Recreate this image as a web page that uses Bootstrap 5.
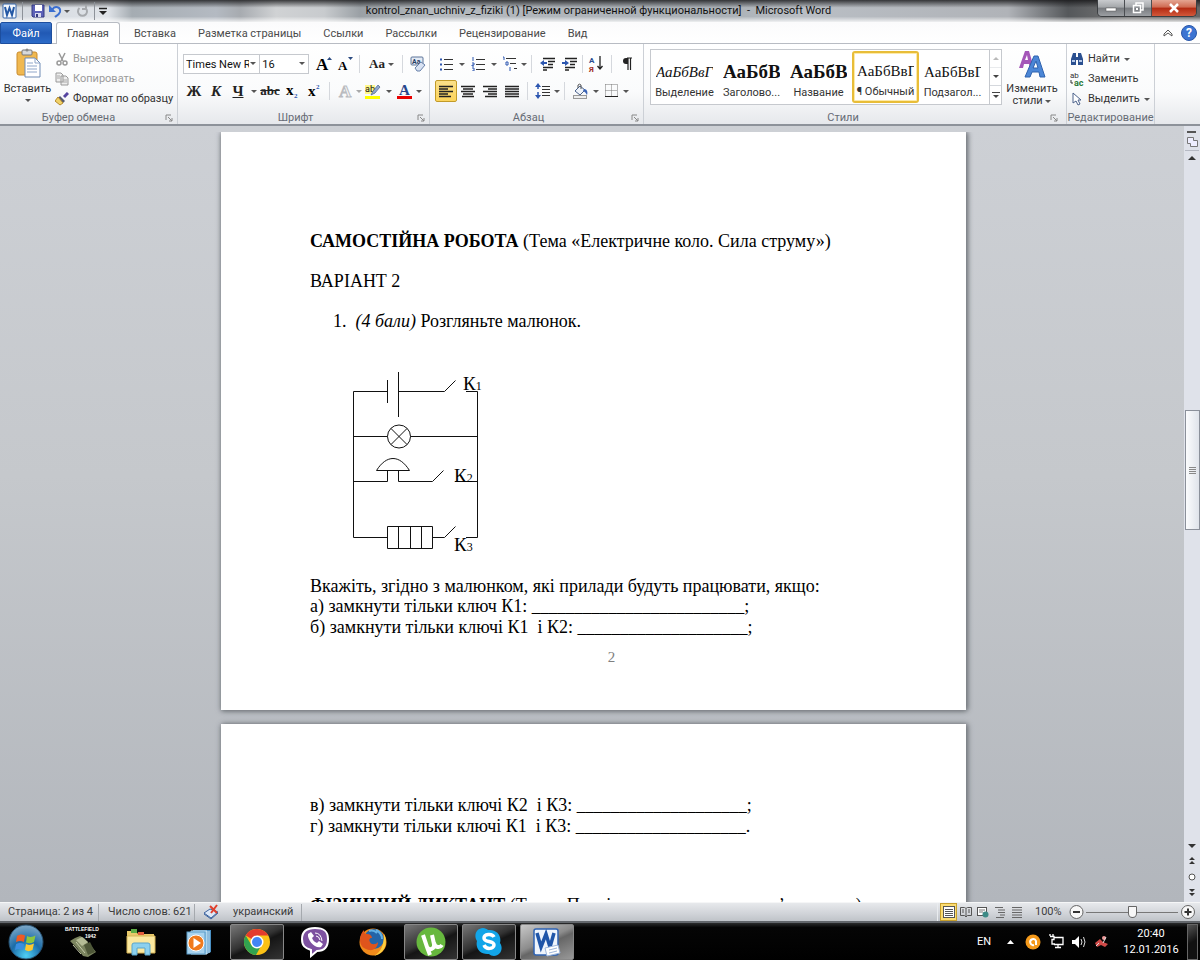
<!DOCTYPE html>
<html lang="ru">
<head>
<meta charset="utf-8">
<meta name="viewport" content="width=device-width, initial-scale=1">
<title>kontrol_znan_uchniv_z_fiziki (1) - Microsoft Word</title>
<link href="https://cdn.jsdelivr.net/npm/bootstrap@5.3.0/dist/css/bootstrap.min.css" rel="stylesheet">
<style>
body{font:11px/14px Roboto,"Open Sans",sans-serif;color:#333;height:100vh;overflow:hidden;background:#c5c8cc}
button,input,select{font:inherit;color:inherit}
button{background:none;border:0;padding:0}
a{color:inherit;text-decoration:none}
svg{display:block;flex:none}
/* title bar */
.titlebar{height:22px;background:linear-gradient(180deg,rgba(20,20,22,.8) 0,rgba(255,255,255,0) 35%,rgba(255,255,255,0) 75%,rgba(255,255,255,.8) 100%),linear-gradient(90deg,#d3d8de 0,#dfe3e8 9%,#a5acb2 11%,#b4bac2 18%,#a7abb0 20%,#d0d2d4 23%,#c8cbce 27%,#9aa0a5 30%,#b5babf 36%,#aab0b6 60%,#b9bec4 67%,#b0b3b8 84%,#55585b 89%,#777 94%,#666 100%)}
.quick{padding-left:2px;width:130px}
.quick .split{background:#8d9299}
.caption-text{color:#111;padding-right:30px;line-height:16px}
.winbtns{height:17px;margin-right:3px;border:1px solid #3c3f42;border-top:0;border-radius:0 0 5px 5px;overflow:hidden}
.winbtn{height:16px;display:flex;align-items:center;justify-content:center;background:linear-gradient(#c9cbce 0,#a4a7aa 45%,#777a7e 50%,#9b9ea2);border-right:1px solid #4b4e52;width:27px}
.winclose{width:44px;border:0;background:linear-gradient(#e4a592 0,#cf6a51 45%,#b32a12 50%,#d2583a)}
/* tabs */
.tabs{height:22px;background:linear-gradient(#fbfbfc,#fff);border-bottom:1px solid #b8bcc3}
.tab{padding:0 11px;height:22px;line-height:23px;color:#4a4a4a}
.tab-file{width:52px;padding:0;margin-right:4px;line-height:21px;text-align:center;color:#fff;border-radius:2px 2px 0 0;border:1px solid #1d4e9e;background:linear-gradient(#3f7bd0,#2159b4 50%,#2c6bc8)}
.tab-on{width:64px;padding:0;text-align:center;line-height:21px;background:#fff;border:1px solid #b8bcc3;border-bottom:0;border-radius:3px 3px 0 0;margin-right:3px}
/* ribbon */
.ribbon{height:82px;background:linear-gradient(#fff 0,#fafbfc 60%,#e6e8ec 100%);border-bottom:2px solid #8d929a}
.group{border-right:1px solid #ccd0d6;flex:none;height:80px}
.group-body{height:66px}
.tools{padding:9px 0 0 5px;display:flex;flex-direction:column;gap:5px}
.group-name{height:14px;color:#666b75;text-align:center;line-height:15px;position:relative}
.corner{position:absolute;right:4px;top:4px}
.g-clip{width:178px}.g-font{width:252px}.g-para{width:214px}.g-style{width:423px}.g-edit{width:88px}
.tool{width:22px;height:22px;display:flex;align-items:center;justify-content:center;flex:none;color:#222}
.tool-on{border:1px solid #c29b29;border-radius:2px;background:linear-gradient(#fbe08a,#fcd45c)}
.drop{width:10px;display:flex;justify-content:center;flex:none}
.drop-s{width:6px;display:flex;justify-content:center;flex:none}
.drop::after,.drop-s::after,.tri::after{content:"";display:inline-block;border:3px solid transparent;border-top:3px solid #555;border-bottom:0;vertical-align:middle}
.split{width:1px;height:18px;background:#d5d8dd;margin:0 4px;flex:none}
.split-s{margin:0 2px}
.toolrow{height:22px}
.combo{height:20px;border:1px solid #c6c9ce;background:#fff;padding:0 10px 0 2px;appearance:none;color:#111;border-radius:0}
.combo-wrap{position:relative}
.combo-wrap::after{content:"";position:absolute;right:4px;top:8px;border:3px solid transparent;border-top-color:#555;border-bottom:0}
.serif{font-family:"Liberation Serif",serif;font-weight:700}
.f13{font-size:13px}.f15{font-size:15px}
.gallery{width:352px;height:56px;border:1px solid #c6c9ce;background:#fff;margin:5px 0 0 6px}
.sty{width:68px;height:52px;text-align:center;overflow:hidden;color:#333;white-space:nowrap;line-height:14px;margin-top:1px;flex:none}
.sty{width:67px}
.sty b{display:block;font:15px/20px "Liberation Serif",serif;color:#111;margin:7px 5px 4px;overflow:hidden;text-align:left}
.sty b.big{font-weight:700;font-size:19px}
.sty-on{border:2px solid #e8bd38;border-radius:3px;box-shadow:inset 0 0 0 1px #fdeaa8}
.sty-on b{margin:5px 3px 4px}
.galscroll{width:12px;border-left:1px solid #c6c9ce}
.galscroll button{height:18px;width:11px;display:flex;align-items:center;justify-content:center;border-bottom:1px solid #d5d8dd}
.cmd{display:flex;align-items:center;gap:4px;height:20px;white-space:nowrap}
.cmd-list{padding-top:5px}
.faded{color:#9a9a9a}
/* work area */
.work{min-height:0;background:linear-gradient(#cdd0d5,#c5c8cc 45%,#b2b6bc)}
.sheets{overflow:hidden;padding:6px 0 0 3px}
.sheet{width:745px;background:#fff;margin:0 auto 14px;padding:99px 89px 0;box-shadow:2px 0 5px #777b80,0 1px 5px #70757a;font:18px/20px "Liberation Serif",serif;color:#000;flex:none}
.sheet-a{height:578px;clip-path:inset(0 -8px -8px -8px)}
.sheet-b{height:400px;padding-top:71px}
.sheet p{margin:0;white-space:pre}
.sheet p.gap-line{margin-bottom:20px}
.blank{font-size:17px}
.circuit{margin:29px 0 16px 29px}
.sheet p.pagenum{text-align:center;color:#808080;font-size:15px;margin:9px 0 0 36px}
.scroll{width:16px;background:#dfe2ea;flex:none;padding:4px 0 5px}
.thumb{width:15px;height:120px;border:1px solid #8b909a;background:linear-gradient(90deg,#fbfcfd,#dfe3ea);display:flex;align-items:center;justify-content:center}
/* status bar */
.status{height:21px;flex:none;background:linear-gradient(#e7e9ec,#d0d3d8 60%,#bfc3c8);border-top:1px solid #f5f6f7;border-bottom:2px solid #63676c;color:#3c3c3c}
.status-cell{border-right:1px solid #a5a9ae;height:17px;display:flex;align-items:center}
.view{width:17px;height:18px;display:flex;align-items:center;justify-content:center}
.view-on{background:#fbdc72;border:1px solid #c79f2c}
.zoomer{appearance:none;width:92px;height:16px;background:linear-gradient(#777,#777) center/100% 1px no-repeat;margin:0 2px}
.zoomer::-webkit-slider-thumb{appearance:none;width:9px;height:12px;background:#f7f7f7;border:1px solid #666;border-radius:1px 1px 5px 5px}
/* taskbar */
.taskbar{height:37px;flex:none;background:linear-gradient(#2a2b2c,#050505 12%,#000);color:#fff}
.task{width:54px;height:36px;display:flex;align-items:center;justify-content:center;flex:none}
.task-open{border:1px solid #888;border-radius:2px;background:linear-gradient(155deg,#777 0,#333 45%,#151515 55%,#333)}
.task-front{background:linear-gradient(155deg,#c8c8c8 0,#8c8c8c 45%,#666 55%,#999)}
.startbtn{width:52px}
.clock{width:78px;padding-left:6px;text-align:center;line-height:16px}
.peek{width:11px;height:36px;border:1px solid #666;margin-right:2px;background:linear-gradient(150deg,#555,#111 50%)}
</style>
</head>
<body class="d-flex flex-column">

<header class="titlebar d-flex align-items-center flex-shrink-0">
  <div class="quick d-flex align-items-center">
    <svg width="16" height="18"><rect x="1" y="2" width="13" height="14" rx="1" fill="#f4f8fd" stroke="#3465a8"/><path d="M3 5l2 8 2.500-7 2.500 7 2-8" fill="none" stroke="#2458a5" stroke-width="2"/></svg>
    <span class="split mx-1"></span>
    <button class="ms-1" aria-label="Сохранить"><svg width="14" height="14"><path d="M1 1h12v12H2L1 12z" fill="#5c61b8" stroke="#353a80"/><rect x="4" y="1" width="7" height="6" fill="#fff"/><rect x="4" y="9" width="6" height="4" fill="#d6d8ee"/><rect x="5" y="10" width="2" height="3" fill="#353a80"/></svg></button>
    <button class="ms-1" aria-label="Отменить"><svg width="13" height="14"><path d="M0 1v7h7z" fill="#3b6fd0"/><path d="M3 6C6 1 12 3 11 8 10 11 7 12 6 13" fill="none" stroke="#3b6fd0" stroke-width="2"/></svg></button>
    <span class="drop"></span>
    <button class="ms-1" aria-label="Повторить"><svg width="14" height="14"><path d="M10 1v4H6M9.500 4a4.500 4.500 0 1 1-6 0" fill="none" stroke="#a6a9ad" stroke-width="2"/></svg></button>
    <span class="split ms-1 me-1"></span>
    <svg width="8" height="9"><path d="M0 1.500h8" stroke="#222" stroke-width="1.500"/><path d="M0 4h8L4 8z" fill="#222"/></svg>
  </div>
  <div class="caption-text flex-fill text-center">kontrol_znan_uchniv_z_fiziki (1) [Режим ограниченной функциональности]&nbsp; -&nbsp; Microsoft Word</div>
  <div class="winbtns d-flex align-self-start">
    <button class="winbtn" aria-label="Свернуть"><svg width="12" height="10"><rect x="1" y="5" width="10" height="3" fill="#fff" stroke="#555" stroke-width=".5"/></svg></button>
    <button class="winbtn" aria-label="Восстановить"><svg width="12" height="12"><path d="M4 3V1h7v7H9" fill="none" stroke="#fff" stroke-width="1.500"/><rect x="1.500" y="3.500" width="7" height="7" fill="none" stroke="#fff" stroke-width="1.500"/><rect x="4" y="6" width="2" height="2" fill="#fff"/></svg></button>
    <button class="winbtn winclose" aria-label="Закрыть"><svg width="12" height="10"><path d="M2 1l8 8M10 1L2 9" stroke="#fff" stroke-width="2.500"/></svg></button>
  </div>
</header>

<nav class="tabs d-flex flex-shrink-0">
  <button class="tab tab-file">Файл</button>
  <a href="#" class="tab tab-on">Главная</a>
  <a href="#" class="tab">Вставка</a>
  <a href="#" class="tab">Разметка страницы</a>
  <a href="#" class="tab">Ссылки</a>
  <a href="#" class="tab">Рассылки</a>
  <a href="#" class="tab">Рецензирование</a>
  <a href="#" class="tab">Вид</a>
  <div class="ms-auto d-flex align-items-center gap-2" style="padding-right:3px">
    <svg width="10" height="8"><path d="M1 5l4-4 4 4v2L5 4 1 7z" fill="#fff" stroke="#555"/></svg>
    <svg width="16" height="16"><circle cx="8" cy="8" r="7.500" fill="#3c74d2" stroke="#2a56a8"/><text x="8" y="12" text-anchor="middle" font-size="12" font-weight="700" fill="#fff">?</text></svg>
  </div>
</nav>

<section class="ribbon d-flex flex-shrink-0">
  <div class="group g-clip">
    <div class="group-body d-flex">
      <button class="d-flex flex-column align-items-center" style="width:55px">
        <svg class="mt-1" width="28" height="30"><rect x="3" y="4" width="20" height="23" rx="2" fill="#f0b850" stroke="#c98b2c"/><rect x="8" y="2" width="10" height="5" rx="1" fill="#d7d9dc" stroke="#777"/><circle cx="13" cy="2" r="1.500" fill="#888"/><path d="M11 10h10l5 5v14H11z" fill="#fff" stroke="#6f8bb5"/><path d="M21 10v5h5M13 18h10M13 21h10M13 24h10M13 15h6" fill="none" stroke="#8fa6c9"/></svg>
        <span class="mt-1">Вставить</span><span class="tri" style="line-height:8px"></span>
      </button>
      <div class="cmd-list">
        <button class="cmd faded"><svg width="14" height="14"><path d="M4 1l4 8M10 1L6 9" stroke="#999" stroke-width="1.500"/><circle cx="4" cy="11" r="2" fill="none" stroke="#999" stroke-width="1.500"/><circle cx="10" cy="11" r="2" fill="none" stroke="#999" stroke-width="1.500"/></svg>Вырезать</button>
        <button class="cmd faded"><svg width="14" height="14"><path d="M1 1h5l2 2v7H1zM6 4h5l2 2v7H6z" fill="#eee" stroke="#999"/><path d="M8 8h4M8 10h4M2 4h3M2 6h3" stroke="#aaa"/></svg>Копировать</button>
        <button class="cmd"><svg width="14" height="14"><path d="M13 1l-4 4" stroke="#5544a0" stroke-width="3"/><path d="M5 4l5 5-2 2-5-5z" fill="#555a70"/><path d="M3 5l5 6-3 2-5-4z" fill="#f1d268" stroke="#b58a2c"/></svg>Формат по образцу</button>
      </div>
    </div>
    <div class="group-name" style="padding-right:20px">Буфер обмена<svg class="corner" width="8" height="8"><path d="M1 6V1h5M3 3l4 4M7 4v3H4" fill="none" stroke="#888"/></svg></div>
  </div>

  <div class="group g-font">
    <div class="group-body tools">
      <div class="toolrow d-flex align-items-center">
        <span class="combo-wrap" style="width:81px"><input class="combo w-100" value="Times New Rc" aria-label="Шрифт"></span>
        <span class="combo-wrap me-1" style="width:51px"><input class="combo w-100 border-start-0" value="16" aria-label="Размер"></span>
        <button class="tool serif" aria-label="Увеличить"><svg width="18" height="18"><text x="1" y="15" font-size="17">A</text><path d="M12 5l2.500-3L17 5z" fill="#2b4a80"/></svg></button>
        <button class="tool serif" aria-label="Уменьшить"><svg width="18" height="18"><text x="1" y="15" font-size="13">A</text><path d="M11 2h5l-2.500 3z" fill="#2b4a80"/></svg></button>
        <span class="split split-s"></span>
        <button class="tool serif ms-1 f13">Aa</button><span class="drop-s me-1"></span>
        <span class="split split-s mx-1"></span>
        <button class="tool" aria-label="Очистить формат"><svg width="18" height="18"><rect x="2" y="2" width="12" height="8" rx="1" fill="#e4ebf5" stroke="#5d7499"/><text x="3" y="9" font-size="7" font-weight="700" fill="#243d66">Aa</text><path d="M6 13l6-6 4 3-5 6H8z" fill="#d7e1f2" stroke="#6881aa"/></svg></button>
      </div>
      <div class="toolrow d-flex align-items-center">
        <button class="tool serif f15">Ж</button><button class="tool serif f15 fst-italic">К</button><button class="tool serif f15 text-decoration-underline">Ч</button><span class="drop"></span>
        <button class="tool serif f13 text-decoration-line-through">abc</button>
        <button class="tool serif" aria-label="Подстрочный"><svg width="16" height="18"><text x="2" y="13" font-size="15">x</text><text x="10" y="16" font-size="7" fill="#2c56b0">2</text></svg></button>
        <button class="tool serif" aria-label="Надстрочный"><svg width="16" height="18"><text x="2" y="14" font-size="15">x</text><text x="10" y="7" font-size="7" fill="#2c56b0">2</text></svg></button>
        <span class="split"></span>
        <button class="tool serif" aria-label="Эффекты"><svg width="18" height="18"><text x="3" y="15" font-size="17" fill="#f4f4f4" stroke="#b9bbbf" stroke-width="1">A</text></svg></button><span class="drop-s opacity-50"></span>
        <button class="tool" aria-label="Выделение цветом"><svg width="20" height="18"><rect x="2" y="14" width="15" height="3" fill="#ff0"/><rect x="2" y="3" width="10" height="9" fill="#fff78a"/><text x="2" y="10" font-size="9" fill="#111">ab</text><path d="M8 13l2-4 5-6 2 2-5 6z" fill="#8fa8cf" stroke="#4c628b" stroke-width=".7"/></svg></button><span class="drop"></span>
        <button class="tool serif" aria-label="Цвет текста"><svg width="18" height="18"><text x="3" y="13" font-size="15" fill="#27478c">A</text><rect x="1" y="14" width="15" height="3" fill="#e80000"/></svg></button><span class="drop-s"></span>
      </div>
    </div>
    <div class="group-name pe-3">Шрифт<svg class="corner" width="8" height="8"><path d="M1 6V1h5M3 3l4 4M7 4v3H4" fill="none" stroke="#888"/></svg></div>
  </div>

  <div class="group g-para">
    <div class="group-body tools">
      <div class="toolrow d-flex align-items-center">
        <button class="tool" aria-label="Маркеры"><svg width="14" height="14"><path d="M5 2.500h9M5 7.500h9M5 12.500h9" stroke="#333"/><path d="M1 2.500h2M1 7.500h2M1 12.500h2" stroke="#2c56b0" stroke-width="2"/></svg></button><span class="drop"></span>
        <button class="tool" aria-label="Нумерация"><svg width="14" height="14"><path d="M5 2.500h9M5 7.500h9M5 12.500h9" stroke="#333"/><path d="M2 0v4M1 6h2v2H1v1h2M1 11h2v3H1" fill="none" stroke="#2c56b0"/></svg></button><span class="drop"></span>
        <button class="tool" aria-label="Многоуровневый список"><svg width="16" height="16"><path d="M4 2.500h10M8 7.500h6M12 12.500h3" stroke="#333"/><path d="M1 1h1v3M4 6h2v3H4zM8 11v4" fill="none" stroke="#2c56b0"/></svg></button><span class="drop-s"></span>
        <span class="split"></span>
        <button class="tool" aria-label="Уменьшить отступ"><svg width="15" height="14"><path d="M3 1.500h12M8 4.500h7M8 7.500h5M3 10.500h10M3 13h4" stroke="#222" stroke-width="1.500"/><path d="M0 6l4-3v2h3v2H4v2z" fill="#2c56b0"/></svg></button>
        <button class="tool" aria-label="Увеличить отступ"><svg width="15" height="14"><path d="M3 1.500h12M8 4.500h7M8 7.500h5M3 10.500h10M3 13h4" stroke="#222" stroke-width="1.500"/><path d="M7 6L3 3v2H0v2h3v2z" fill="#2c56b0"/></svg></button>
        <span class="split split-s"></span>
        <button class="tool" aria-label="Сортировка"><svg width="16" height="18"><text x="1" y="8" font-size="8" font-weight="700" fill="#2c4c90">А</text><text x="1" y="17" font-size="8" font-weight="700" fill="#a03028">Я</text><path d="M12 1v13M9.500 11l2.500 3 2.500-3" fill="none" stroke="#222" stroke-width="1.300"/></svg></button>
        <span class="split"></span>
        <button class="tool" aria-label="Знаки"><svg width="12" height="14"><path d="M6 1h5M7 1v12M9.500 1v12" stroke="#222" stroke-width="1.200"/><path d="M7 1H5a3 3 0 0 0 0 6h2z" fill="#222"/></svg></button>
      </div>
      <div class="toolrow d-flex align-items-center">
        <button class="tool tool-on" aria-label="По левому краю"><svg width="14" height="13"><path d="M0 1.500h14M0 4h9M0 6.500h14M0 9h9M0 11.500h12" stroke="#222" stroke-width="1.300"/></svg></button>
        <button class="tool" aria-label="По центру"><svg width="14" height="13"><path d="M0 1.500h14M2 4h10M0 6.500h14M2 9h10M1 11.500h12" stroke="#222" stroke-width="1.300"/></svg></button>
        <button class="tool" aria-label="По правому краю"><svg width="14" height="13"><path d="M0 1.500h14M5 4h9M0 6.500h14M5 9h9M2 11.500h12" stroke="#222" stroke-width="1.300"/></svg></button>
        <button class="tool" aria-label="По ширине"><svg width="14" height="13"><path d="M0 1.500h14M0 4h14M0 6.500h14M0 9h14M0 11.500h14" stroke="#222" stroke-width="1.300"/></svg></button>
        <span class="split"></span>
        <button class="tool" aria-label="Интервал"><svg width="16" height="16"><path d="M7 3.500h8M7 6.500h8M7 9.500h8M7 12.500h8" stroke="#333"/><path d="M3 3v3M3 9v4" stroke="#2c56b0" stroke-width="1.500"/><path d="M0 4l3-4 3 4zM0 12l3 4 3-4z" fill="#2c56b0"/></svg></button><span class="drop-s"></span>
        <span class="split split-s mx-1"></span>
        <button class="tool" aria-label="Заливка"><svg width="17" height="16"><path d="M3 8l5-5 5 4-5 5z" fill="#eef3fa" stroke="#4c628b"/><path d="M6 5V2a2 2 0 0 1 3 0v4" fill="none" stroke="#555"/><path d="M12 6c3 0 4 3 3 6-1-1-1-3-4-4z" fill="#3a63b5"/><rect x="1.500" y="12.500" width="13" height="3" fill="#eee" stroke="#999"/></svg></button><span class="drop"></span>
        <button class="tool" aria-label="Границы"><svg width="14" height="14"><path d="M.5.500h12v12M.5.500v12M6.500.500v12M.5 6.500h12" fill="none" stroke="#777" stroke-dasharray="1 1"/><path d="M0 12.500h13" stroke="#222"/></svg></button><span class="drop-s"></span>
      </div>
    </div>
    <div class="group-name pe-3">Абзац<svg class="corner" width="8" height="8"><path d="M1 6V1h5M3 3l4 4M7 4v3H4" fill="none" stroke="#888"/></svg></div>
  </div>

  <div class="group g-style">
    <div class="group-body d-flex">
      <div class="gallery d-flex flex-shrink-0">
        <button class="sty"><b class="fst-italic">АаБбВвГ</b>Выделение</button>
        <button class="sty"><b class="big">АаБбВ</b>Заголово...</button>
        <button class="sty"><b class="big">АаБбВ</b>Название</button>
        <button class="sty sty-on"><b>АаБбВвГ</b>¶ Обычный</button>
        <button class="sty"><b>АаБбВвГ</b>Подзагол...</button>
        <div class="galscroll ms-auto flex-shrink-0">
          <button class="opacity-50" aria-label="Вверх"><svg width="6" height="3"><path d="M0 3h6L3 0z" fill="#777"/></svg></button>
          <button aria-label="Вниз"><svg width="6" height="3"><path d="M0 0h6L3 3z" fill="#444"/></svg></button>
          <button class="border-0" aria-label="Все стили"><svg width="8" height="7"><path d="M0 .5h8" stroke="#444"/><path d="M1 3h6L4 6z" fill="#444"/></svg></button>
        </div>
      </div>
      <button class="d-flex flex-column align-items-center" style="width:60px">
        <svg class="mt-1" width="30" height="30"><path d="M2 20L8 3h4l5 17h-4l-1-4H7l-1 4zM8 12h3l-1-5z" fill="#a456b8" fill-rule="evenodd"/><path d="M8 29L17 8h4l7 21h-5l-1-5h-7l-2 5zM16 20h5l-2-7z" fill="#4b86d6" stroke="#2f62ae" fill-rule="evenodd"/></svg>
        <span style="line-height:12px;margin-top:5px">Изменить<br>стили <span class="tri"></span></span>
      </button>
    </div>
    <div class="group-name pe-4">Стили<svg class="corner me-1" width="8" height="8"><path d="M1 6V1h5M3 3l4 4M7 4v3H4" fill="none" stroke="#888"/></svg></div>
  </div>

  <div class="group g-edit">
    <div class="group-body cmd-list" style="padding-left:3px">
      <button class="cmd"><svg width="14" height="14"><path d="M3 1h3v4h2V1h3l2 6v6H8V8H6v5H1V7z" fill="#2b5090"/><path d="M2 9h3M9 9h3" stroke="#b5c9ea" stroke-width="2"/></svg>Найти <span class="tri"></span></button>
      <button class="cmd"><svg width="14" height="16"><text x="0" y="7" font-size="8" fill="#333">ab</text><text x="4" y="15" font-size="9" font-weight="700" fill="#2c7a3a">ac</text><path d="M1 9v3h2" fill="none" stroke="#333"/></svg>Заменить</button>
      <button class="cmd"><svg width="14" height="14"><path d="M3 1v10l3-2 2 4 2-1-2-4h3z" fill="#fff" stroke="#4c628b"/></svg>Выделить <span class="tri"></span></button>
    </div>
    <div class="group-name">Редактирование</div>
  </div>
</section>

<main class="work d-flex flex-fill">
  <div class="sheets flex-fill d-flex flex-column">
    <article class="sheet sheet-a">
      <p class="gap-line"><b>САМОСТІЙНА РОБОТА</b> (Тема «Електричне коло. Сила струму»)</p>
      <p class="gap-line">ВАРІАНТ 2</p>
      <p style="padding-left:23px">1.  <i>(4 бали)</i> Розгляньте малюнок.</p>
      <svg class="circuit" width="160" height="200" fill="none" stroke="#111">
        <path d="M48.500 31.500h-34v146h34M48.500 20v23M59.500 12v45M59.500 31.500h46l11-11M127 31.500h11.500v146H127M14.500 76.500h34M71.500 76.500h67M14.500 121.500h34v-11M59.500 110.500v11h34l11-11M116 121.500h22.500M93.500 177.500h12l11-11"/>
        <circle cx="60" cy="76.500" r="11.500"/><path d="M52 68.500l16 16M68 68.500l-16 16M37.500 110.500h33c-10-16-23-16-33 0zM48.500 166.500h45v22h-45zM59.500 166.500v22M71.500 166.500v22M82.500 166.500v22"/>
        <g fill="#000" stroke="none" font-size="19"><text x="124" y="30">К<tspan font-size="12">1</tspan></text><text x="115" y="122">К<tspan font-size="12">2</tspan></text><text x="115" y="191">К<tspan font-size="12">3</tspan></text></g>
      </svg>
      <p>Вкажіть, згідно з малюнком, які прилади будуть працювати, якщо:</p>
      <p>а) замкнути тільки ключ К1: <span class="blank">_________________________</span>;</p>
      <p>б) замкнути тільки ключі К1  і К2: <span class="blank">____________________</span>;</p>
      <p class="pagenum">2</p>
    </article>
    <article class="sheet sheet-b">
      <p>в) замкнути тільки ключі К2  і К3: <span class="blank">____________________</span>;</p>
      <p style="margin-bottom:58px">г) замкнути тільки ключі К1  і К3: <span class="blank">____________________</span>.</p>
      <p><b>ФІЗИЧНИЙ ДИКТАНТ</b> (Тема «Послідовне та паралельне з’єднання»)</p>
    </article>
  </div>
  <aside class="scroll d-flex flex-column align-items-center">
    <svg width="14" height="36"><path d="M2 2h9" stroke="#555" stroke-width="2"/><path d="M2.500 7.500h6v3h4v6h-7v-3h-3z" fill="#eef" stroke="#777"/><path d="M0 20.500h14" stroke="#b5b9c3"/><path d="M3 30h8l-4-4z" fill="#333"/></svg>
    <div style="flex:245"></div>
    <div class="thumb"><svg width="7" height="7"><path d="M0 .5h7M0 2.500h7M0 4.500h7M0 6.500h7" stroke="#888"/></svg></div>
    <div style="flex:310"></div>
    <svg width="14" height="58"><path d="M3 5h8l-4 4z" fill="#333"/><path d="M4 21l3-3 3 3zM4 25l3-3 3 3zM4 50l3 3 3-3zM4 54l3 3 3-3z" fill="#333"/><circle cx="7" cy="38" r="3" fill="#fff" stroke="#555"/></svg>
  </aside>
</main>

<footer class="status d-flex align-items-center">
  <div class="status-cell ps-2" style="width:99px">Страница: 2 из 4</div>
  <div class="status-cell" style="width:96px;padding-left:9px">Число слов: 621</div>
  <div class="status-cell ps-2" style="width:107px"><svg width="17" height="16"><path d="M1 9l6-4 8 3-7 6z" fill="#dce7f6" stroke="#3d64a0"/><path d="M1 10l7 5 7-6" fill="none" stroke="#3d64a0"/><path d="M7 2l7 7M14 1L8 9" stroke="#e0402c" stroke-width="2"/></svg><span style="padding-left:13px">украинский</span></div>
  <div class="ms-auto border-start border-secondary-subtle d-flex align-items-center" style="padding:0 4px 0 2px">
    <button class="view view-on" aria-label="Разметка"><svg width="12" height="12"><rect x=".5" y=".5" width="11" height="11" fill="#fff" stroke="#555"/><path d="M2 3.500h8M2 5.500h8M2 7.500h8M2 9.500h8" stroke="#555"/></svg></button>
    <button class="view" aria-label="Чтение"><svg width="12" height="12"><path d="M.5 1.500h4l1.500 1 1.500-1h4v8h-4L6 11l-1.500-1.500h-4zM6 3v8M2 4h2M2 6h2M8 4h2M8 6h2" fill="none" stroke="#555"/></svg></button>
    <button class="view" aria-label="Веб"><svg width="12" height="12"><rect x=".5" y="1.500" width="9" height="8" fill="#fff" stroke="#555"/><path d="M2 4h6M2 6h4" stroke="#777"/><circle cx="8.500" cy="8.500" r="3" fill="#3c8a86"/></svg></button>
    <button class="view" aria-label="Структура"><svg width="12" height="12"><path d="M1 1.500h8M4 4h7M4 6.500h7M6 9h5M2 11.500h8" stroke="#666"/></svg></button>
    <button class="view" aria-label="Черновик"><svg width="12" height="12"><path d="M1 1.500h10M1 4h10M1 6.500h10M1 9h10M1 11.500h10" stroke="#666"/></svg></button>
    <span style="width:42px;padding-left:10px;margin-right:2px">100%</span>
    <button aria-label="Уменьшить масштаб"><svg width="15" height="16"><circle cx="7.500" cy="8" r="6.500" fill="#f8f8f8" stroke="#666"/><path d="M4 8h7" stroke="#333" stroke-width="2"/></svg></button>
    <input class="zoomer" type="range" min="0" max="100" value="50" aria-label="Масштаб">
    <button aria-label="Увеличить масштаб"><svg width="16" height="16"><circle cx="8" cy="8" r="6.500" fill="#f8f8f8" stroke="#666"/><path d="M4.500 8h7M8 4.500v7" stroke="#333" stroke-width="2"/></svg></button>
  </div>
</footer>

<footer class="taskbar d-flex align-items-center">
  <button class="task startbtn" aria-label="Пуск"><svg width="36" height="36"><defs><radialGradient id="orb" cx=".5" cy=".9" r=".9"><stop offset="0" stop-color="#4fd0f5"/><stop offset=".5" stop-color="#1b6ca8"/><stop offset="1" stop-color="#7fa9c8"/></radialGradient></defs><circle cx="18" cy="18" r="17" fill="url(#orb)" stroke="#27506f"/><path d="M9 12c3-2 5-2 8-.5L16 18c-3-1.500-5-1.500-8 0z" fill="#ee5a24"/><path d="M19 12c3 1.500 6 1 8.500-.5L26 18c-3 1.500-5 1.500-8 .5z" fill="#8cc63e"/><path d="M8 20c3-1.500 5-1.500 8 0l-1 6c-3-1.500-5-1.500-8 0z" fill="#3b8ee0"/><path d="M18 20c3 1.500 5 1 8-.5L24.500 26c-3 1.500-5 1.500-7.500 0z" fill="#fdc82f"/></svg></button>
  <div class="d-flex gap-1 ms-1">
    <button class="task" aria-label="Battlefield 1942"><svg width="40" height="34"><g transform="translate(3 0)"><path d="M4 16l5-3 5-2 4 2 8 9 4 5-8 5-5-1-6-8z" fill="#7c8560"/><path d="M10 15l6-3 6 5-6 4z" fill="#b5bc96"/><path d="M18 20l6-3 5 10-7 3z" fill="#4e5738"/><path d="M7 20l8 9M10 17l9 11" stroke="#c4caa8"/></g><g font-family="Liberation Sans" font-size="5" font-weight="700" fill="#fff"><text x="2" y="6">BATTLEFIELD</text><text x="22" y="13">1942</text></g></svg></button>
    <button class="task" aria-label="Проводник"><svg width="34" height="34"><path d="M3 6h9l2 3h16v19H3z" fill="#e8c96a"/><path d="M7 4h6v4H7z" fill="#5fae45"/><path d="M14 7h6v3h-6z" fill="#e05d3c"/><path d="M3 11h28v17H3z" fill="#fbe89f" stroke="#d6b457"/><path d="M8 30V20q0-2 2-2h14q2 0 2 2v10h-5v-7h-8v7z" fill="#8cd0ee" stroke="#5aa5cb"/></svg></button>
    <button class="task" aria-label="Media Player"><svg width="30" height="30"><path d="M9 3h18v22l-4 2H9z" fill="#4a90c4"/><path d="M7 4h16v23H7zM25 4v22" fill="#8ec3e6" stroke="#d2e8f5"/><rect x="3" y="5" width="18" height="22" fill="#a8d2ed" stroke="#5a9dca"/><circle cx="12" cy="16" r="8" fill="#f07a1c" stroke="#fff"/><path d="M9.500 11l7.500 5-7.500 5z" fill="#fff"/></svg></button>
    <button class="task task-open" aria-label="Chrome"><svg width="28" height="28"><circle cx="14" cy="14" r="13" fill="#fbc116"/><path d="M14 14L2.700 7.500A13 13 0 0 1 25.300 7.500H14z" fill="#e33b2e"/><path d="M2.700 7.500A13 13 0 0 0 13 27l5.500-10-9.500 1z" fill="#31a350"/><circle cx="14" cy="14" r="6.500" fill="#fff"/><circle cx="14" cy="14" r="5" fill="#4285f4"/></svg></button>
    <button class="task" aria-label="Viber"><svg width="30" height="32"><path d="M15 2c9 0 13 3 13 11s-3 12-11 12l-6 5v-6C5 22 2 20 2 13S6 2 15 2z" fill="#7d51a0" stroke="#fff" stroke-width="2"/><path d="M8 8l3-2 3 4-2 2c1 2 2 4 5 5l2-2 4 3-2 3c-6 2-14-7-13-13z" fill="#fff"/><path d="M15 7q6 0 7 8M16 10q3 0 4 4" fill="none" stroke="#fff" stroke-width="1"/></svg></button>
    <button class="task" aria-label="Firefox"><svg width="30" height="30"><circle cx="15" cy="15" r="13.500" fill="#f08a1b"/><circle cx="16" cy="12" r="10" fill="#2465a8"/><path d="M18 3c4 2 6 5 6 9M11 4c3-1 6 0 8 2" stroke="#62b1e5" stroke-width="2" fill="none"/><path d="M2 13C2 8 4 5 6 3c0 3 1 4 3 4 3 0 5 2 5 4-3 0-3 2-2 4 1 3 6 3 8 0 0 5-4 9-9 8C6 22 2 19 2 13z" fill="#df541c"/><path d="M26 7c4 8 2 19-10 22 7-4 10-11 10-22z" fill="#fdcf3f"/></svg></button>
    <button class="task task-open" aria-label="uTorrent"><svg width="32" height="32"><circle cx="16" cy="16" r="14.500" fill="#67b83e"/><path d="M8 9l4 12c2 4 8 2 7-3L17 9M19 17c1 5 6 5 8 2M12 21l3 8" fill="none" stroke="#fff" stroke-width="4"/></svg></button>
    <button class="task task-open" aria-label="Skype"><svg width="30" height="30"><path d="M9 1c2 0 4 1 5 2 8-1 14 5 12 13 4 6 0 13-6 13-2 0-4-1-5-2C7 28 1 22 3 14-1 8 3 1 9 1z" fill="#12a5e8"/><path d="M20 10c-2-4-10-3-10 1 0 5 10 2 10 7 0 4-8 5-10 0" fill="none" stroke="#fff" stroke-width="3.500"/></svg></button>
    <button class="task task-open task-front" aria-label="Word"><svg width="30" height="30"><rect x="2" y="2" width="24" height="26" rx="2" fill="#eef4fc" stroke="#2f63b3" stroke-width="1.500"/><path d="M5 6l4 14 5-13 4 13 4-14" fill="none" stroke="#1f55a8" stroke-width="3.500"/><path d="M13 21l13-3 2 8-13 3z" fill="#fff" stroke="#9db6db"/><path d="M17 23l8-2M17 26l8-2" stroke="#9db6db"/></svg></button>
  </div>
  <div class="ms-auto d-flex align-items-center">
    <span style="width:30px">EN</span>
    <svg width="7" height="4"><path d="M0 4h7L3.500 0z" fill="#fff"/></svg>
    <svg style="margin:0 8px 0 11px" width="16" height="16"><circle cx="8" cy="8" r="7.500" fill="#f59a1b"/><path d="M11 11V7a3 3 0 1 0-2 4" fill="none" stroke="#fff" stroke-width="2"/></svg>
    <svg class="me-2" width="15" height="15"><path d="M5 3.500h9v7H5M9 11v2M6 13.500h6M1 2.500h4v3H3V10h3M1 0v2M4 0v2" fill="none" stroke="#fff" stroke-width="1.300"/></svg>
    <svg class="me-2" width="14" height="14"><path d="M0 5h3l4-4v12L3 9H0z" fill="#fff"/><path d="M9 4q2 3 0 6M11.500 2q3 5 0 10" fill="none" stroke="#ddd"/></svg>
    <svg width="15" height="15"><path d="M1 9l5-4 3 3 5 2-3 3-4-2-4 2z" fill="#d04a48"/><circle cx="10" cy="4" r="2" fill="#e99"/><path d="M9 9l3-6M2 12l3-3" stroke="#ddd"/></svg>
    <div class="clock">20:40<br>12.01.2016</div>
    <button class="peek" aria-label="Свернуть все окна"></button>
  </div>
</footer>
<script src="https://cdn.jsdelivr.net/npm/bootstrap@5.3.0/dist/js/bootstrap.bundle.min.js"></script>
</body>
</html>
